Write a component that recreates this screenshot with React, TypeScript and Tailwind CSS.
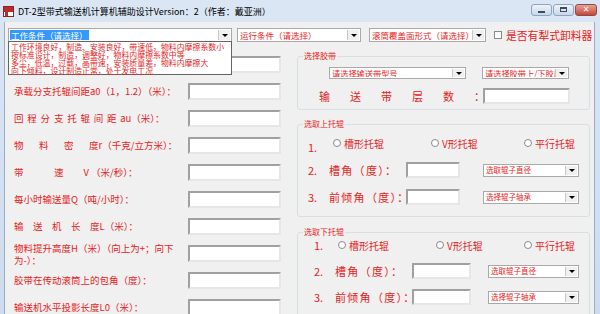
import { useState } from "react";

const red = "text-[#e8231d]";

type Row = {
  label: string;
  last?: string;
  gap?: string;
  tail?: string;
  cls?: string;
  wrap?: boolean;
};

const leftRows: Row[] = [
  { label: "" },
  { label: "承载分支托辊间距a0（1，1.2）（米）：" },
  { label: "回程分支托辊间", last: "距", gap: "mr-[3.5px]", tail: "au（米）：", cls: "tracking-[3.8px]" },
  { label: "物料密", last: "度", tail: "r（千克/立方米）：", cls: "tracking-[15.5px]" },
  { label: "带", last: "速", gap: "mr-[20px]", tail: "V （米/秒）：", cls: "tracking-[30.5px]" },
  { label: "每小时输送量Q（吨/小时）：" },
  { label: "输送机长", last: "度", tail: "L（米）：", cls: "tracking-[9.5px]" },
  { label: "物料提升高度H（米）（向上为+；向下为-）：", wrap: true },
  { label: "胶带在传动滚筒上的包角（度）：" },
  { label: "输送机水平投影长度L0（米）：" },
];

const workOptions = [
  "工作环境良好，制造、安装良好，带速低，物料内摩擦系数小",
  "按标准设计，制造，调整好，物料内摩擦系数中等",
  "多尘，低温，过载，高带速，安装质量差，物料内摩擦大",
  "向下倾料，设计制造正常，处于发电工况",
];

function Arrow() {
  return (
    <div className="w-[12px] h-full bg-[#f0f0f0] border-l border-[#c8c8c8] flex items-center justify-center shrink-0">
      <div className="w-0 h-0 border-l-[3px] border-r-[3px] border-t-[3px] border-l-transparent border-r-transparent border-t-black" />
    </div>
  );
}

function Combo({
  w,
  h = "h-[14px]",
  text,
  size = "text-[8.5px]",
  selected = false,
}: {
  w: string;
  h?: string;
  text: string;
  size?: string;
  selected?: boolean;
}) {
  return (
    <div className={`${w} ${h} flex bg-white border border-[#a9a9a9] p-px shrink-0`}>
      <div className="flex-1 overflow-hidden flex items-center">
        <span
          className={`${size} leading-none whitespace-nowrap px-px ${
            selected ? "bg-[#3399ff] text-white py-px" : red
          }`}
        >
          {text}
        </span>
      </div>
      <Arrow />
    </div>
  );
}

function Field({ w, h = "h-[17px]" }: { w: string; h?: string }) {
  return (
    <div
      className={`${w} ${h} bg-white border-2 border-t-[#a0a0a0] border-l-[#a0a0a0] border-r-[#e6e6e6] border-b-[#e6e6e6] shrink-0`}
    />
  );
}

function Radio() {
  return (
    <div className="w-[8px] h-[8px] rounded-full border border-[#8a8a8a] bg-white shrink-0" />
  );
}

function RollerGroup({ title, lower }: { title: string; lower?: boolean }) {
  return (
    <fieldset
      className={`border border-[#d5dfe5] rounded-[3px] ${
        lower ? "h-[90px] mt-[10px]" : "h-[98px] mt-[9px]"
      }`}
    >
      <legend className={`ml-[5px] px-px text-[8px] leading-[10px] ${red}`}>{title}</legend>
      <div className={`flex items-center h-[16px] ${lower ? "" : "mt-[6px]"}`}>
        <span
          className={`${lower ? "pl-[16px] w-[40px]" : "pl-[10px] w-[35px]"} text-[11px] ${red} ${
            lower ? "" : "pt-[8px]"
          }`}
        >
          1.
        </span>
        <Radio />
        <span className={`ml-[3px] w-[87px] text-[10px] ${red}`}>槽形托辊</span>
        <Radio />
        <span className={`ml-[3px] ${lower ? "w-[77px]" : "w-[82px]"} text-[10px] ${red}`}>
          V形托辊
        </span>
        <Radio />
        <span className={`ml-[3px] text-[10px] ${red}`}>平行托辊</span>
      </div>
      {[
        { n: "2.", t: "槽角（度）：", c: "选取辊子直径" },
        { n: "3.", t: "前倾角（度）：", c: "选择辊子轴承" },
      ].map((r) => (
        <div
          key={r.n}
          className={`flex items-center h-[16px] ${lower ? "mt-[10px]" : "mt-[11px]"}`}
        >
          <span
            className={`${lower ? "w-[37px] pl-[16px]" : "w-[31px] pl-[10px]"} shrink-0 text-[11px] ${red}`}
          >
            {r.n}
          </span>
          <span
            className={`w-[77px] shrink-0 text-[11px] tracking-[1.3px] whitespace-nowrap ${red}`}
          >
            {r.t}
          </span>
          <Field w={lower ? "w-[59px]" : "w-[54px]"} h="h-[16px]" />
          <div className={lower ? "ml-[17px]" : "ml-[23px]"}>
            <Combo
              w={lower ? "w-[91px]" : "w-[96px]"}
              h="h-[13px]"
              text={r.c}
              size="text-[7.5px]"
            />
          </div>
        </div>
      ))}
    </fieldset>
  );
}

function TitleButton({ kind }: { kind: "min" | "max" | "close" }) {
  if (kind === "close")
    return (
      <div className="w-[22px] h-[12px] rounded-[3px] border border-[#8c4b43] bg-gradient-to-b from-[#e8a093] to-[#c4453a] flex items-center justify-center">
        <span className="text-white text-[8px] font-bold leading-none font-['DejaVu_Sans',sans-serif]">
          ✕
        </span>
      </div>
    );
  return (
    <div className="w-[21px] h-[12px] rounded-[3px] border border-[#8ea5c2] bg-gradient-to-b from-[#eef3f9] to-[#c9d7e8] flex items-center justify-center">
      {kind === "min" ? (
        <div className="w-[7px] h-[2px] bg-[#3c4b5e] mt-[4px]" />
      ) : (
        <div className="w-[7px] h-[5px] border border-[#3c4b5e] border-t-2" />
      )}
    </div>
  );
}

export default function App() {
  const [plough, setPlough] = useState(false);

  return (
    <div className="w-[600px] h-[314px] overflow-hidden bg-gradient-to-b from-[#dbe6f4] to-[#cddcee] flex flex-col font-['Noto_Sans_CJK_SC',sans-serif]">
      {/* title bar */}
      <div className="h-[22px] flex items-center shrink-0 pl-[3px] pr-[3px]">
        <div className="w-[11px] h-[11px] bg-white border border-[#7a2a2a] relative mr-[4px]">
          <div className="absolute left-0 top-0 w-[9px] h-[5px] bg-[#c0292c]" />
          <div className="absolute left-[1px] top-[5px] w-[3px] h-[4px] bg-[#c0292c]" />
        </div>
        <span className="text-[9px] text-black leading-none whitespace-nowrap">
          DT-2型带式输送机计算机辅助设计Version：2（作者：戴亚洲）
        </span>
        <div className="ml-auto flex gap-[1px] -mt-[3px]">
          <TitleButton kind="min" />
          <TitleButton kind="max" />
          <TitleButton kind="close" />
        </div>
      </div>

      {/* client area */}
      <div className="flex-1 ml-[4px] mr-[5px] bg-[#f0f0f0] relative border-l border-r border-[#97aecb]">
        <div className="flex items-center pt-[6px] pl-[3px] h-[20px]">
          <Combo w="w-[224px]" text="工作条件（请选择）" selected />
          <div className="ml-[5px]">
            <Combo w="w-[124px]" text="运行条件（请选择）" />
          </div>
          <div className="ml-[8px]">
            <Combo w="w-[117px]" text="滚筒覆盖面形式（请选择）" />
          </div>
          <button
            onClick={() => setPlough(!plough)}
            className="ml-[8px] w-[8px] h-[8px] bg-white border border-[#8a8a8a] shrink-0 text-[7px] leading-none"
          >
            {plough ? "✓" : ""}
          </button>
          <span className={`ml-[4px] text-[10.8px] leading-none whitespace-nowrap ${red}`}>
            是否有犁式卸料器
          </span>
        </div>

        <div className="flex">
          {/* left column */}
          <div className="mt-[9px] flex flex-col w-[276px] shrink-0">
            {leftRows.map((r, i) => (
              <div key={i} className="h-[27px] flex items-center">
                <div className="w-[183px] pl-[9px] shrink-0">
                  {r.wrap ? (
                    <div className={`w-[168px] text-[9.5px] leading-[12px] ${red}`}>{r.label}</div>
                  ) : r.tail ? (
                    <div className={`text-[9.5px] whitespace-nowrap ${red}`}>
                      <span className={r.cls}>{r.label}</span>
                      <span className={r.gap}>{r.last}</span>
                      <span>{r.tail}</span>
                    </div>
                  ) : (
                    <div className={`text-[9.5px] whitespace-nowrap ${red}`}>{r.label}</div>
                  )}
                </div>
                <Field w="w-[93px]" />
              </div>
            ))}
          </div>

          {/* right column */}
          <div className="ml-[16px] w-[293px] mt-[9px] flex flex-col">
            <fieldset className="border border-[#d5dfe5] rounded-[3px] h-[59px]">
              <legend className={`ml-[5px] px-px text-[8px] leading-[10px] ${red}`}>选择胶带</legend>
              <div className="flex items-center mt-[6px] pl-[31px]">
                <Combo w="w-[137px]" h="h-[12px]" text="请选择输送带型号" size="text-[8.2px]" />
                <div className="ml-[16px]">
                  <Combo w="w-[87px]" h="h-[12px]" text="请选择胶带上/下胶厚" size="text-[8.2px]" />
                </div>
              </div>
              <div className="flex items-center mt-[9px]">
                <span
                  className={`w-[185px] pl-[21px] text-[11px] tracking-[20px] whitespace-nowrap ${red}`}
                >
                  输送带层数<span className="tracking-normal">：</span>
                </span>
                <Field w="w-[87px]" h="h-[16px]" />
              </div>
            </fieldset>

            <RollerGroup title="选取上托辊" />
            <RollerGroup title="选取下托辊" lower />
          </div>
        </div>

        {/* open dropdown list */}
        <div className="absolute left-[3px] top-[19px] w-[224px] h-[34px] bg-white border border-[#646464] px-[2px] pt-px">
          {workOptions.map((o) => (
            <div
              key={o}
              className={`text-[7.9px] leading-[8px] whitespace-nowrap overflow-hidden ${red}`}
            >
              {o}
            </div>
          ))}
        </div>
      </div>
    </div>
  );
}
